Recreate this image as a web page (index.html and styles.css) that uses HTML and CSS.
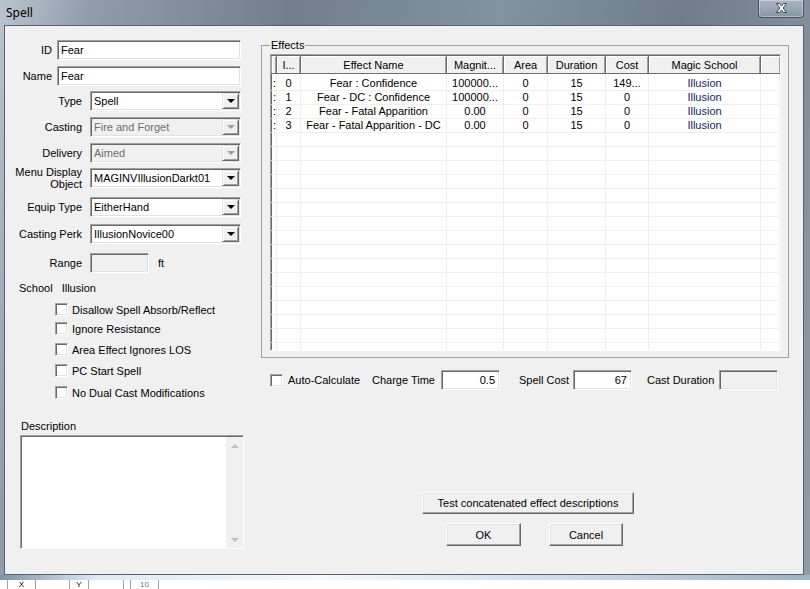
FILE: index.html
```html
<!DOCTYPE html>
<html lang="en">
<head>
  <meta charset="UTF-8" />
  <title>Spell</title>
  <link rel="stylesheet" href="styles.css">
</head>
<body>
  <div class="window">
    <div class="titlebar">
      <span class="title">Spell</span>
      <div class="close">
        <svg width="13" height="10" viewBox="0 0 13 10">
          <path d="M1.5 0.5h3l2 2.6 2-2.6h3L8.2 5l3.3 4.5h-3l-2-2.6-2 2.6h-3L4.8 5z" fill="#fff" stroke="#3b4650" stroke-width="1" stroke-linejoin="round"/>
        </svg>
      </div>
    </div>

    <div class="client">
      <div class="form">
        <div class="row short g14">
          <label class="lab">ID</label>
          <div class="field">Fear</div>
        </div>
        <div class="row short g6">
          <label class="lab">Name</label>
          <div class="field">Fear</div>
        </div>
        <div class="row g5">
          <label class="lab">Type</label>
          <div class="field combo"><span>Spell</span><span class="drop"><i class="tri"></i></span></div>
        </div>
        <div class="row g6">
          <label class="lab">Casting</label>
          <div class="field combo disabled"><span>Fire and Forget</span><span class="drop"><i class="tri"></i></span></div>
        </div>
        <div class="row g6">
          <label class="lab">Delivery</label>
          <div class="field combo disabled"><span>Aimed</span><span class="drop"><i class="tri"></i></span></div>
        </div>
        <div class="row g5">
          <label class="lab two">Menu Display Object</label>
          <div class="field combo"><span>MAGINVIllusionDarkt01</span><span class="drop"><i class="tri"></i></span></div>
        </div>
        <div class="row g9">
          <label class="lab">Equip Type</label>
          <div class="field combo"><span>EitherHand</span><span class="drop"><i class="tri"></i></span></div>
        </div>
        <div class="row g7">
          <label class="lab">Casting Perk</label>
          <div class="field combo"><span>IllusionNovice00</span><span class="drop"><i class="tri"></i></span></div>
        </div>
        <div class="row g9">
          <label class="lab">Range</label>
          <div class="field small disabled"></div>
          <span class="unit">ft</span>
        </div>

        <div class="school"><span>School</span><span>Illusion</span></div>

        <div class="check g9"><span class="box"></span>Disallow Spell Absorb/Reflect</div>
        <div class="check g6"><span class="box"></span>Ignore Resistance</div>
        <div class="check g8"><span class="box"></span>Area Effect Ignores LOS</div>
        <div class="check g8"><span class="box"></span>PC Start Spell</div>
        <div class="check g9"><span class="box"></span>No Dual Cast Modifications</div>

        <div class="desc-label">Description</div>
        <div class="desc">
          <div class="desc-text"></div>
          <div class="vscroll">
            <i class="arrow up"></i>
            <i class="arrow down"></i>
          </div>
        </div>
      </div>

      <div class="side">
        <fieldset class="group">
          <legend>Effects</legend>
          <div class="list">
            <table class="effects">
              <colgroup>
                <col class="c-pre"><col class="c-idx"><col class="c-name"><col class="c-mag"><col class="c-area"><col class="c-dur"><col class="c-cost"><col class="c-school"><col class="c-fill">
              </colgroup>
              <thead>
                <tr><th></th><th>I...</th><th>Effect Name</th><th>Magnit...</th><th>Area</th><th>Duration</th><th>Cost</th><th>Magic School</th><th></th></tr>
              </thead>
              <tbody id="rows"></tbody>
            </table>
          </div>
        </fieldset>

        <div class="calc">
          <span class="box"></span>
          <span class="w-auto">Auto-Calculate</span>
          <span class="w-charge">Charge Time</span>
          <div class="field num">0.5</div>
          <span class="w-cost">Spell Cost</span>
          <div class="field num">67</div>
          <span class="w-dur">Cast Duration</span>
          <div class="field num disabled"></div>
        </div>

        <button class="btn test">Test concatenated effect descriptions</button>
        <div class="actions">
          <button class="btn ok">OK</button>
          <button class="btn cancel">Cancel</button>
        </div>
      </div>
    </div>
    <div class="frame-bottom"></div>
  </div>
  <div class="under">
    <span class="cell c1"></span>
    <span class="cell c2">X</span>
    <span class="cell c3"></span>
    <span class="cell c4">Y</span>
    <span class="cell c5"></span>
    <span class="cell c6"></span>
    <span class="cell c7">10</span>
  </div>

  <script>
    const effects = [
      ["0", "Fear : Confidence", "100000...", "0", "15", "149...", "Illusion"],
      ["1", "Fear - DC : Confidence", "100000...", "0", "15", "0", "Illusion"],
      ["2", "Fear - Fatal Apparition", "0.00", "0", "15", "0", "Illusion"],
      ["3", "Fear - Fatal Apparition - DC", "0.00", "0", "15", "0", "Illusion"]
    ];
    const rows = document.getElementById("rows");
    for (let i = 0; i < 20; i++) {
      const e = effects[i];
      const tr = document.createElement("tr");
      if (e) {
        tr.innerHTML = "<td class='pre'>:</td>" + e.map((v, k) => `<td${k === 6 ? " class='school-cell'" : ""}>${v}</td>`).join("") + "<td></td>";
      } else {
        tr.innerHTML = "<td></td>".repeat(9);
      }
      rows.appendChild(tr);
    }
  </script>
</body>
</html>
```

FILE: styles.css
```css
* {
  box-sizing: border-box;
}
body {
  margin: 0;
  width: 810px;
  height: 589px;
  overflow: hidden;
  font-family: "Liberation Sans", Arial, sans-serif;
  font-size: 11px;
  color: #000;
  background: linear-gradient(100deg, #bac4ce 0%, #8f9dab 10%, #717f8d 32%, #83929f 55%, #6f7d8b 75%, #8f9ca9 100%);
}
.window {
  height: 580px;
  padding: 0 6px 0 4px;
  display: flex;
  flex-direction: column;
}
.titlebar {
  height: 25px;
  display: flex;
  justify-content: space-between;
  align-items: flex-start;
}
.title {
  font-family: "Noto Sans", "Open Sans", sans-serif;
  font-size: 12px;
  padding: 4px 0 0 2px;
  color: #000;
}
.close {
  width: 46px;
  height: 18px;
  border: 1px solid #4a5561;
  border-top: none;
  border-radius: 0 0 4px 4px;
  background: linear-gradient(#a9b4c0, #8896a4);
  box-shadow: inset 0 0 0 1px rgba(255, 255, 255, 0.35);
  display: flex;
  align-items: center;
  justify-content: center;
  padding-bottom: 1px;
}
.client {
  height: 550px;
  background: #f0f0f0;
  border: 1px solid #56626e;
  display: grid;
  grid-template-columns: 250px 1fr;
}

/* left column */
.form {
  display: flex;
  flex-direction: column;
}
.row {
  display: flex;
  align-items: center;
  height: 20px;
}
.lab {
  width: 77px;
  margin-right: 8px;
  text-align: right;
}
.lab.two {
  line-height: 12px;
  padding-left: 8px;
}
.row.short .lab {
  width: 47px;
  margin-right: 5px;
}
.field {
  height: 20px;
  background: #fff;
  border: 1px solid;
  border-color: #a0a0a0 #fff #fff #a0a0a0;
  box-shadow: inset 1px 1px #696969, inset -1px -1px #e3e3e3;
  padding: 0 3px;
  display: flex;
  align-items: center;
  white-space: nowrap;
  overflow: hidden;
}
.row.short .field {
  width: 184px;
}
.combo {
  width: 151px;
  justify-content: space-between;
  padding-right: 1px;
}
.disabled {
  background: #f0f0f0;
  color: #6d6d6d;
}
.drop {
  width: 17px;
  height: 16px;
  background: #f0f0f0;
  border: 1px solid;
  border-color: #e3e3e3 #696969 #696969 #e3e3e3;
  box-shadow: inset 1px 1px #fff, inset -1px -1px #a0a0a0;
  display: flex;
  align-items: center;
  justify-content: center;
}
.tri {
  width: 0;
  height: 0;
  border-left: 4px solid transparent;
  border-right: 4px solid transparent;
  border-top: 4px solid #000;
}
.disabled .tri {
  border-top-color: #a0a0a0;
}
.field.small {
  width: 59px;
}
.unit {
  margin-left: 9px;
}
.g5 { margin-top: 5px; }
.g6 { margin-top: 6px; }
.g7 { margin-top: 7px; }
.g8 { margin-top: 8px; }
.g9 { margin-top: 9px; }
.g14 { margin-top: 14px; }

.school {
  margin-top: 9px;
  padding-left: 14px;
  line-height: 12px;
  display: flex;
  gap: 9px;
}
.check {
  display: flex;
  align-items: center;
  height: 13px;
  padding-left: 50px;
}
.box {
  width: 13px;
  height: 13px;
  flex: none;
  background: #fff;
  border: 1px solid;
  border-color: #a0a0a0 #fff #fff #a0a0a0;
  box-shadow: inset 1px 1px #696969, inset -1px -1px #e3e3e3;
  margin-right: 4px;
}
.desc-label {
  margin-top: 21px;
  padding-left: 16px;
  line-height: 12px;
}
.desc {
  margin: 3px 0 0 15px;
  width: 224px;
  height: 114px;
  display: flex;
  background: #fff;
  border: 1px solid;
  border-color: #a0a0a0 #fff #fff #a0a0a0;
  box-shadow: inset 1px 1px #696969;
  padding: 1px 0 0 1px;
}
.desc-text {
  flex: 1;
}
.vscroll {
  width: 17px;
  background: #f0f0f0;
  display: flex;
  flex-direction: column;
  justify-content: space-between;
  align-items: center;
  padding: 7px 0 6px;
}
.arrow {
  width: 0;
  height: 0;
  border-left: 4px solid transparent;
  border-right: 4px solid transparent;
}
.arrow.up {
  border-bottom: 4px solid #c0c0c0;
}
.arrow.down {
  border-top: 4px solid #c0c0c0;
}

/* right column */
.side {
  display: flex;
  flex-direction: column;
  align-items: flex-start;
}
.group {
  margin: 13px 0 0 6px;
  width: 528px;
  height: 319px;
  border: 1px solid #a0a0a0;
  padding: 2px 7px 0 8px;
}
.group legend {
  padding: 0 1px;
  line-height: 13px;
}
.list {
  width: 511px;
  height: 297px;
  overflow: hidden;
  background: #fff;
  border: 1px solid;
  border-color: #a0a0a0 #fff #fff #a0a0a0;
  box-shadow: inset 1px 1px #696969;
}
.effects {
  table-layout: fixed;
  width: 509px;
  border-spacing: 0;
  margin: 1px 0 0 0;
}
.c-pre { width: 6px; }
.c-idx { width: 24px; }
.c-name { width: 146px; }
.c-mag { width: 57px; }
.c-area { width: 44px; }
.c-dur { width: 58px; }
.c-cost { width: 43px; }
.c-school { width: 112px; }
.c-fill { width: 19px; }
.effects th {
  height: 18px;
  padding: 0;
  font-weight: normal;
  background: #f0f0f0;
  border-right: 1px solid #6d6d6d;
  border-bottom: 1px solid #6d6d6d;
  box-shadow: inset 1px 1px #fff, inset -1px 0 #a0a0a0;
  white-space: nowrap;
  overflow: hidden;
}
.effects th:first-child {
  border-left: 1px solid #a0a0a0;
}
.effects th:last-child {
  border-right: none;
}
.effects td {
  height: 14px;
  padding: 0;
  text-align: center;
  line-height: 13px;
  border-right: 1px solid #efefef;
  border-bottom: 1px solid #efefef;
  white-space: nowrap;
  overflow: hidden;
}
.effects td.pre {
  text-align: left;
  padding-left: 2px;
}
.effects td.school-cell {
  color: #1a2460;
}
.effects tbody tr:first-child td {
  height: 17px;
  padding-top: 3px;
}

.calc {
  margin: 12px 0 0 15px;
  display: flex;
  align-items: center;
  height: 20px;
}
.calc .box {
  margin-right: 5px;
}
.w-auto { width: 84px; }
.w-charge { width: 69px; }
.w-cost { width: 54px; margin-left: 19px; }
.w-dur { width: 72px; margin-left: 15px; }
.field.num {
  width: 59px;
  justify-content: flex-end;
  padding-right: 4px;
}
.btn {
  font-family: inherit;
  font-size: 11px;
  color: #000;
  background: #f0f0f0;
  border: 1px solid;
  border-color: #fff #696969 #696969 #fff;
  box-shadow: inset -1px -1px #a0a0a0, inset 1px 1px #e3e3e3;
  padding: 0;
}
.test {
  margin: 102px 0 0 167px;
  width: 212px;
  height: 22px;
}
.actions {
  margin: 9px 0 0 191px;
  display: flex;
  gap: 28px;
}
.ok,
.cancel {
  width: 75px;
  height: 23px;
}
.cancel {
  width: 74px;
}

.frame-bottom {
  height: 5px;
  margin: 0 -6px 0 -4px;
  background: linear-gradient(to right, #7f93a6, #dfeaf3 12%, #f3f8fc 40%, #cddbe7 70%, #9fb2c3);
}
.under {
  height: 9px;
  background: #fff;
  display: flex;
  overflow: hidden;
  font-size: 8px;
  line-height: 9px;
}
.cell {
  border-left: 1px solid #a0a0a0;
  height: 9px;
  text-align: center;
}
.c1 { width: 7px; border-left: none; }
.c2 { width: 28px; }
.c3 { width: 34px; }
.c4 { width: 19px; }
.c5 { width: 35px; }
.c6 { width: 7px; }
.c7 { width: 29px; color: #777; border-right: 1px solid #a0a0a0; }
```
